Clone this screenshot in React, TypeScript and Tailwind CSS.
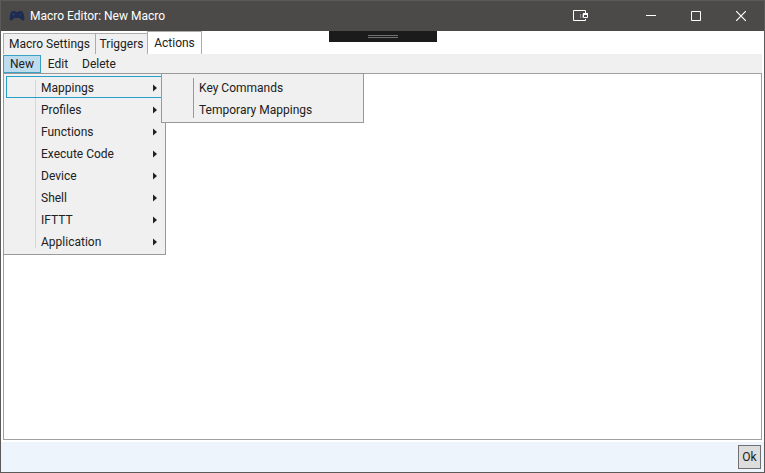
import React from "react";

const actionGroups = [
  "Mappings",
  "Profiles",
  "Functions",
  "Execute Code",
  "Device",
  "Shell",
  "IFTTT",
  "Application",
];

const mappingActions = ["Key Commands", "Temporary Mappings"];

function GamepadIcon() {
  return (
    <svg width="16" height="12" viewBox="0 0 16 12" aria-hidden="true">
      <path
        d="M4 1h2l1 1h2l1-1h2c1.500 0 2.200 1.200 2.800 3.500.6 2.300.9 4.500.2 5.500-.6.900-1.800.6-2.600-.3L10.500 8h-5L3.600 9.700c-.8.900-2 1.200-2.600.3-.7-1-.4-3.200.2-5.500C1.800 2.200 2.500 1 4 1z"
        fill="#1d2c50"
      />
      <path d="M4.500 3v3M3 4.500h3" stroke="#2a3a60" />
      <circle cx="11.500" cy="4.500" r="1" fill="#2a3a60" />
    </svg>
  );
}

function TitleBar() {
  return (
    <header className="flex h-[30px] shrink-0 items-center bg-[#4c4a48] pl-2 text-white">
      <GamepadIcon />
      <h1 className="ml-[5px] grow text-xs">Macro Editor: New Macro</h1>
      <button aria-label="Dock" className="mr-6 flex h-full w-[46px] items-center justify-center">
        <svg width="16" height="12" viewBox="0 0 16 12" fill="none">
          <path d="M12.500 3V.5H.5v10h12V9" stroke="white" />
          <path d="M7.500 4v4M9.500 4v4" stroke="#8b8a94" />
          <path d="M10.500 4.500h4v3h-4z" stroke="white" />
          <path d="M10 4h5" stroke="white" strokeWidth="2" />
        </svg>
      </button>
      <button aria-label="Minimize" className="flex h-full w-[46px] items-center justify-center">
        <svg width="10" height="10" viewBox="0 0 10 10">
          <path d="M0 4.500h10" stroke="white" />
        </svg>
      </button>
      <button aria-label="Maximize" className="flex h-full w-11 items-center justify-center">
        <svg width="10" height="10" viewBox="0 0 10 10" fill="none">
          <path d="M.5.5h9v9h-9z" stroke="white" />
        </svg>
      </button>
      <button aria-label="Close" className="flex h-full w-[46px] items-center justify-center">
        <svg width="10" height="10" viewBox="0 0 10 10">
          <path d="M0 0l10 10M10 0L0 10" stroke="white" strokeWidth="1.200" />
        </svg>
      </button>
    </header>
  );
}

function Tabs() {
  return (
    <div role="tablist" className="flex h-[23px] items-end">
      <button role="tab" aria-selected="false" className="h-[21px] w-[93px] border border-b-0 border-[#acacac] bg-[#f0f0f0]">
        Macro Settings
      </button>
      <button role="tab" aria-selected="false" className="h-[21px] w-[51px] border-t border-[#acacac] bg-[#f0f0f0]">
        Triggers
      </button>
      <button role="tab" aria-selected="true" className="h-[23px] w-[55px] border border-b-0 border-[#acacac] bg-white">
        Actions
      </button>
    </div>
  );
}

function Submenu() {
  return (
    <ul role="menu" className="absolute -top-[3px] left-[155px] w-[203px] border border-[#999999] bg-[#f0f0f0] py-0.5">
      <li aria-hidden="true" className="absolute top-1 bottom-1 left-[31px] w-px bg-[#999999]" />
      {mappingActions.map((label) => (
        <li key={label} role="none">
          <button role="menuitem" className="flex h-[22px] w-full items-center pt-0.5 pl-[37px]">
            {label}
          </button>
        </li>
      ))}
    </ul>
  );
}

function NewMenu() {
  return (
    <ul role="menu" className="absolute top-full left-0 w-[163px] border border-[#999999] bg-[#f0f0f0] px-0.5 py-0.5">
      <li aria-hidden="true" className="absolute top-1.5 bottom-1.5 left-[31px] w-px bg-[#d7d7d7]" />
      {actionGroups.map((label, index) => (
        <li key={label} role="none" className="relative">
          <button
            role="menuitem"
            aria-haspopup="menu"
            className={
              "flex h-[22px] w-full items-center justify-between border pt-0.5 pr-[5px] pl-[34px] " +
              (index === 0 ? "border-[#26a0c7]" : "border-transparent")
            }
          >
            {label}
            <svg width="4" height="8" viewBox="0 0 4 8" aria-hidden="true">
              <path d="M0 0.500L4 4L0 7.500z" fill="#212121" />
            </svg>
          </button>
          {index === 0 && <Submenu />}
        </li>
      ))}
    </ul>
  );
}

export default function App() {
  return (
    <div className="flex min-h-screen flex-col border border-[#5c5a58] bg-white font-['Roboto','Noto_Sans',sans-serif] text-xs text-[#212121]">
      <TitleBar />
      <div className="relative flex grow flex-col px-0.5">
        <div className="absolute top-0 left-1/2 flex h-[11px] w-[108px] -translate-x-1/2 justify-center bg-[#1b1b1b] pt-1">
          <div className="h-[3px] w-[30px] border-y border-[#707070]" />
        </div>
        <Tabs />
        <nav role="menubar" className="relative flex h-[19px] bg-[#f0f0f0] pt-px">
          <button role="menuitem" className="w-[38px] border border-[#3c9fc4] bg-[#bddcee]">
            New
          </button>
          <button role="menuitem" className="w-[34px]">Edit</button>
          <button role="menuitem" className="w-12">Delete</button>
          <NewMenu />
        </nav>
        <main className="grow border border-[#a0a0a0] bg-white" />
      </div>
      <footer className="mt-0.5 flex h-[30px] shrink-0 items-center justify-end bg-[#edf4fc] pr-[3px]">
        <button className="h-6 w-[23px] border border-[#707070] bg-[#dddddd]">Ok</button>
      </footer>
    </div>
  );
}
